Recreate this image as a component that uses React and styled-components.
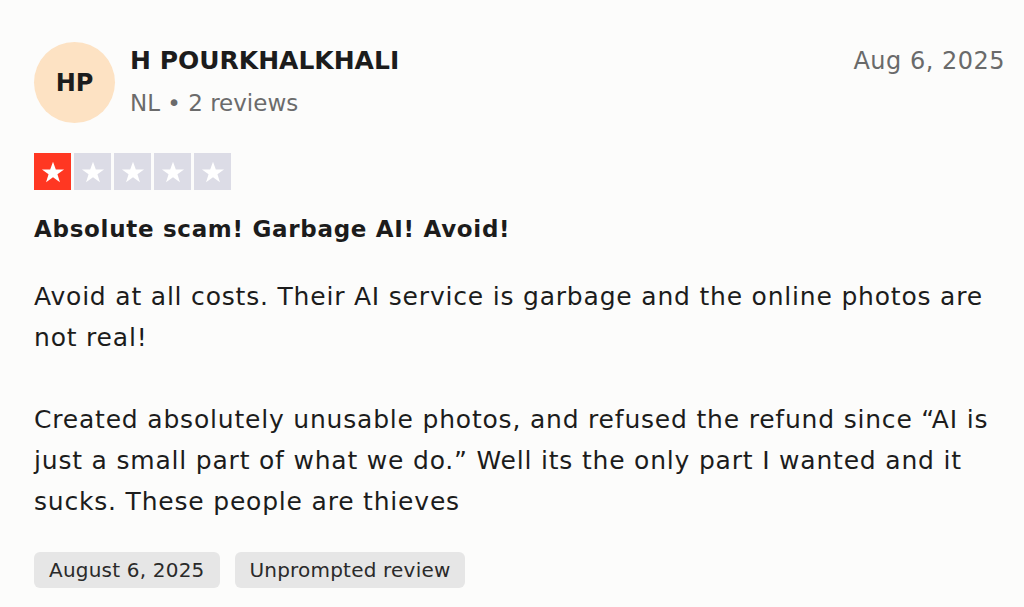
import React from "react";
import styled, { createGlobalStyle } from "styled-components";

const Global = createGlobalStyle`
  html, body { margin: 0; padding: 0; background: #fcfcfb; }
  body { font-family: "DejaVu Sans", "Liberation Sans", sans-serif; color: #1c1c1c; }
`;

const Card = styled.article`
  width: 1024px;
  height: 607px;
  box-sizing: border-box;
  padding: 42px 19px 0 34px;
  background: #fcfcfb;
`;

const Header = styled.header`
  display: flex;
  align-items: flex-start;
`;

const Avatar = styled.div`
  width: 81px;
  height: 81px;
  border-radius: 50%;
  background: #fde2c3;
  display: flex;
  align-items: center;
  justify-content: center;
  font-size: 24px;
  font-weight: 600;
  color: #1c1c1c;
  flex-shrink: 0;
`;

const Who = styled.div`
  display: flex;
  flex-direction: column;
  margin-left: 15px;
  flex: 1;
`;

const Name = styled.div`
  font-size: 25px;
  font-weight: 600;
  line-height: 38px;
`;

const Meta = styled.div`
  font-size: 23px;
  line-height: 38px;
  color: #6b6b6b;
  margin-top: 4px;
`;

const DateText = styled.div`
  font-size: 24px;
  letter-spacing: 0.5px;
  color: #696a6a;
  line-height: 38px;
`;

const Stars = styled.div`
  display: flex;
  gap: 3px;
  margin-top: 30px;
`;

const StarBox = styled.div`
  width: 37px;
  height: 37px;
  background: ${(p) => (p.$on ? "#ff3722" : "#dcdce6")};
  display: flex;
  align-items: center;
  justify-content: center;
`;

const Title = styled.h2`
  margin: 22px 0 0;
  font-size: 23px;
  letter-spacing: 0.7px;
  font-weight: 600;
  line-height: 34px;
`;

const Body = styled.p`
  margin: 30px 0 0;
  font-size: 25px;
  letter-spacing: 0.8px;
  line-height: 41px;
  white-space: pre-line;
`;

const Tags = styled.div`
  display: flex;
  gap: 15px;
  margin-top: 30px;
`;

const Tag = styled.span`
  background: #e6e6e6;
  border-radius: 6px;
  height: 36px;
  padding: 0 15px;
  display: flex;
  align-items: center;
  font-size: 20px;
  letter-spacing: 0.2px;
  color: #2a2a2a;
`;

const Star = () => (
  <svg width="26" height="26" viewBox="0 0 24 24">
    <path
      fill="#fff"
      d="M12 2.5l2.6 7.1h7.6l-6.1 4.5 2.3 7.3L12 16.9l-6.4 4.5 2.3-7.3-6.1-4.5h7.6z"
    />
  </svg>
);

export default function App() {
  return (
    <Card>
      <Global />
      <Header>
        <Avatar>HP</Avatar>
        <Who>
          <Name>H POURKHALKHALI</Name>
          <Meta>NL • 2 reviews</Meta>
        </Who>
        <DateText>Aug 6, 2025</DateText>
      </Header>
      <Stars>
        {[1, 2, 3, 4, 5].map((i) => (
          <StarBox key={i} $on={i === 1}>
            <Star />
          </StarBox>
        ))}
      </Stars>
      <Title>Absolute scam! Garbage AI! Avoid!</Title>
      <Body>
        {"Avoid at all costs. Their AI service is garbage and the online photos are not real!\n\nCreated absolutely unusable photos, and refused the refund since “AI is just a small part of what we do.” Well its the only part I wanted and it sucks. These people are thieves"}
      </Body>
      <Tags>
        <Tag>August 6, 2025</Tag>
        <Tag>Unprompted review</Tag>
      </Tags>
    </Card>
  );
}
